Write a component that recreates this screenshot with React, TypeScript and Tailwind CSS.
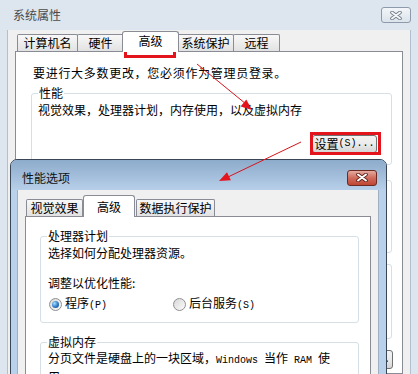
import type { ReactNode } from 'react';

const mono = "font-['Liberation_Mono',monospace] text-[10px]";

function CloseButton({ active }: { active?: boolean }) {
  return (
    <div
      className={`flex h-[16px] w-[30px] items-center justify-center rounded-[3px] border ${
        active
          ? 'border-[#6b2a22] bg-gradient-to-b from-[#e4aaa0] via-[#cf6a5c] to-[#c04533]'
          : 'border-[#8d9aab] bg-gradient-to-b from-[#f3f6f9] to-[#dce3eb]'
      }`}
    >
      <svg width="12" height="9" viewBox="0 0 12 9">
        <path d="M2 1.5 L10 7.5 M10 1.5 L2 7.5" stroke={active ? '#5a1e16' : '#6f7b88'} strokeWidth="3.6" strokeLinecap="round" />
        <path d="M2 1.5 L10 7.5 M10 1.5 L2 7.5" stroke={active ? '#ffffff' : '#f4f6f8'} strokeWidth="2" strokeLinecap="round" />
      </svg>
    </div>
  );
}

function Tab({ label, className, active }: { label: string; className: string; active?: boolean }) {
  if (active) {
    return (
      <div className={`relative z-10 -mb-px flex justify-center rounded-t-[3px] border border-b-0 border-[#898c95] bg-white ${className}`}>
        {label}
      </div>
    );
  }
  return (
    <div
      className={`flex h-[17px] items-center justify-center rounded-t-[2px] border border-b-0 border-[#898c95] bg-gradient-to-b from-[#f8f8f8] to-[#e2e2e2] ${className}`}
    >
      {label}
    </div>
  );
}

function Group({ title, className, children }: { title: string; className?: string; children: ReactNode }) {
  return (
    <fieldset className={`rounded-[3px] border border-[#d5dfe5] ${className ?? ''}`}>
      <legend className="ml-[6px] px-[1px]">{title}</legend>
      {children}
    </fieldset>
  );
}

function Button({ children, className }: { children: ReactNode; className?: string }) {
  return (
    <div
      className={`flex h-[18px] items-center justify-center rounded-[3px] border border-[#707070] bg-gradient-to-b from-[#f3f3f3] via-[#ebebeb] to-[#d5d5d5] ${className ?? ''}`}
    >
      {children}
    </div>
  );
}

function Radio({ checked }: { checked?: boolean }) {
  return (
    <span className="flex h-[13px] w-[13px] shrink-0 items-center justify-center rounded-full border border-[#8e8f8f] bg-gradient-to-br from-[#d8d8d8] to-[#fbfbfb]">
      {checked && (
        <span className="h-[7px] w-[7px] rounded-full bg-[radial-gradient(circle_at_35%_35%,#a9e0ff,#2a78c6_55%,#15427f)]" />
      )}
    </span>
  );
}

function BackWindow() {
  return (
    <div className="flex h-full flex-col">
      <div className="flex h-[30px] items-center justify-between pl-[13px] pr-[7px]">
        <span className="text-[#4a4a4a]">系统属性</span>
        <CloseButton />
      </div>
      <div className="mx-[7px] flex flex-1 flex-col border-x border-[#b3bfcc] bg-[#f0f0f0] px-[7px] pt-[1px]">
        <div className="flex items-end pl-[2px]">
          <Tab label="计算机名" className="w-[61px]" />
          <Tab label="硬件" className="-ml-px w-[47px]" />
          <Tab label="高级" active className="-ml-[2px] h-[21px] w-[57px] pt-[1px]" />
          <Tab label="系统保护" className="-ml-[2px] w-[57px]" />
          <Tab label="远程" className="-ml-px w-[47px]" />
        </div>
        <div className="flex-1 border border-[#898c95] bg-white pl-[15px] pr-[10px] pt-[13px]">
          <p className="ml-[2px] tracking-[0.7px]">要进行大多数更改，您必须作为管理员登录。</p>
          <Group title="性能" className="mt-[4px] pb-[11px]">
            <p className="mt-[1px] pl-[6px]">视觉效果，处理器计划，内存使用，以及虚拟内存</p>
            <div className="mr-[14px] mt-[17px] flex justify-end">
              <Button className="w-[65px]">
                设置<span className={mono}>(S)...</span>
              </Button>
            </div>
          </Group>
          <Group title="用户配置文件" className="mt-[7px] pb-[16px]">
            <p className="pl-[6px]">与登录帐户相关的桌面设置</p>
            <div className="mr-[14px] mt-[14px] flex justify-end">
              <Button className="w-[65px]">
                设置<span className={mono}>(E)...</span>
              </Button>
            </div>
          </Group>
          <Group title="启动和故障恢复" className="mt-[3px] pb-[18px]">
            <p className="pl-[6px]">系统启动、系统失败和调试信息</p>
            <div className="mr-[14px] mt-[14px] flex justify-end">
              <Button className="w-[65px]">
                设置<span className={mono}>(T)...</span>
              </Button>
            </div>
          </Group>
          <div className="-mr-px mt-[11px] flex justify-end">
            <Button className="h-[19px] w-[90px]">
              环境变量<span className={mono}>(N)...</span>
            </Button>
          </div>
        </div>
      </div>
    </div>
  );
}

function FrontWindow() {
  return (
    <div className="absolute left-[10px] top-[159px] flex h-[240px] w-[377px] flex-col rounded-t-[7px] border border-[#3a4656] bg-[#b9d1ea]">
      <div className="flex h-[30px] items-center justify-between rounded-t-[6px] bg-gradient-to-b from-[#8dabcb] to-[#b7cfe9] pl-[11px] pr-[9px] pt-[5px]">
        <span className="text-[#111]">性能选项</span>
        <CloseButton active />
      </div>
      <div className="ml-[6px] mr-[7px] flex flex-1 flex-col border-x border-[#9fb0c3] bg-[#f0f0f0] pl-[7px] pr-[7px] pt-[5px]">
        <div className="flex items-end pl-[1px]">
          <Tab label="视觉效果" className="w-[57px]" />
          <Tab label="高级" active className="h-[22px] w-[52px] pt-[3px]" />
          <Tab label="数据执行保护" className="ml-px w-[79px]" />
        </div>
        <div className="flex-1 border border-[#898c95] bg-white pl-[14px] pr-[11px] pt-[11px]">
          <Group title="处理器计划" className="pb-[10px]">
            <p className="mt-[1px] pl-[7px]">选择如何分配处理器资源。</p>
            <p className="mt-[14px] pl-[7px]">调整以优化性能:</p>
            <div className="mt-[5px] flex h-[16px] items-center pl-[8px]">
              <label className="flex w-[124px] items-center gap-[3px]">
                <Radio checked />
                <span>
                  程序<span className={mono}>(P)</span>
                </span>
              </label>
              <label className="flex items-center gap-[3px]">
                <Radio />
                <span>
                  后台服务<span className={mono}>(S)</span>
                </span>
              </label>
            </div>
          </Group>
          <Group title="虚拟内存" className="mt-[11px] pb-[10px]">
            <p className="pl-[7px]">
              分页文件是硬盘上的一块区域，<span className={mono}>Windows </span>当作<span className={mono}> RAM </span>使
              <br />
              用。
            </p>
          </Group>
        </div>
      </div>
    </div>
  );
}

function Annotations() {
  return (
    <>
      <div className="absolute left-[124px] top-[31px] h-[27px] w-[52px] border-[3px] border-[#e3141b]" />
      <div className="absolute left-[310px] top-[132px] h-[23px] w-[71px] border-[3px] border-[#e3141b]" />
      <svg className="pointer-events-none absolute left-0 top-0" width="418" height="374" viewBox="0 0 418 374">
        <line x1="197" y1="64" x2="246" y2="104" stroke="#d9141a" strokeWidth="1" />
        <polygon points="252,110 240.6,106.5 246.3,99.5" fill="#e3141b" />
        <line x1="301" y1="142" x2="228" y2="177" stroke="#d9141a" strokeWidth="1" />
        <polygon points="219,181 227,172.2 230.9,180.3" fill="#e3141b" />
      </svg>
    </>
  );
}

export default function App() {
  return (
    <div className="relative h-[374px] w-[418px] overflow-hidden bg-[#dde5ee] font-['Noto_Sans_CJK_SC',sans-serif] text-[12px] leading-[16px] text-black">
      <BackWindow />
      <FrontWindow />
      <Annotations />
    </div>
  );
}
